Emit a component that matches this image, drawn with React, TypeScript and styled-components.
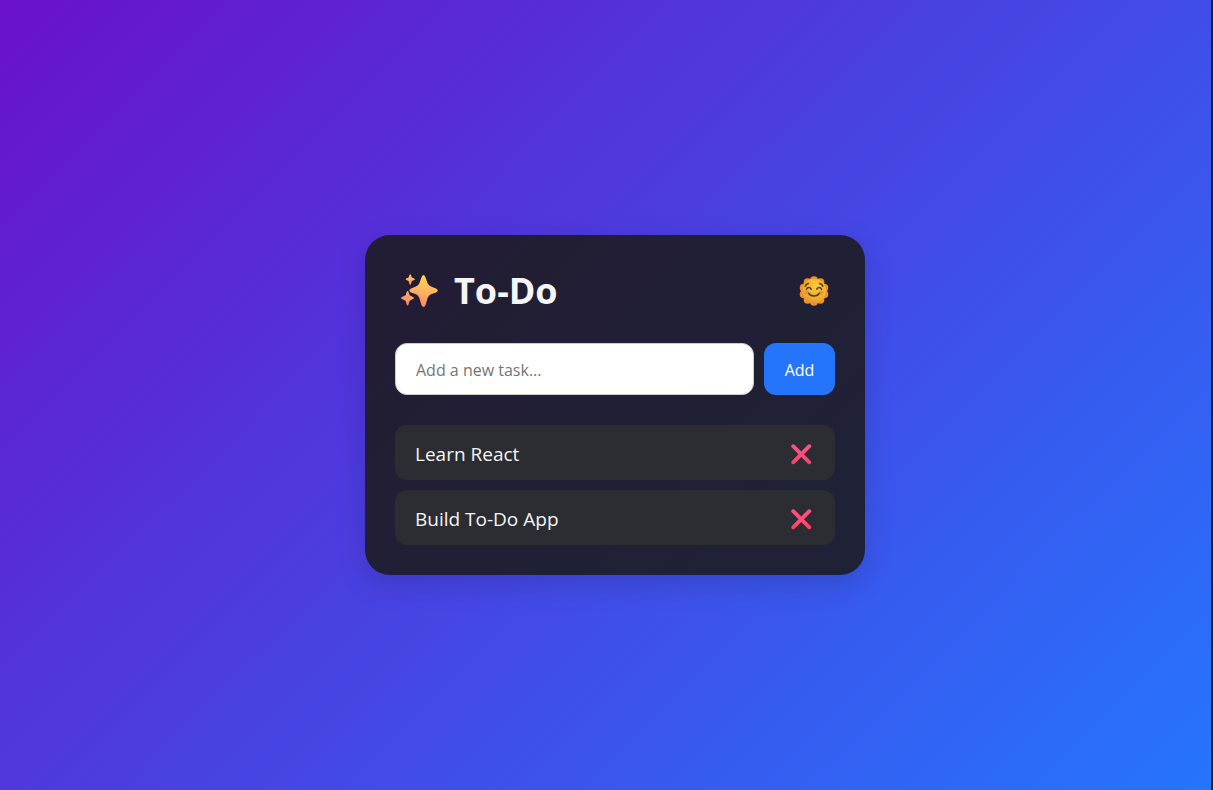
import React, { useState } from "react";
import styled, { createGlobalStyle } from "styled-components";

const GlobalStyle = createGlobalStyle`
  *, *::before, *::after { box-sizing: border-box; }
  body {
    margin: 0;
    background: #222226;
    font-family: "Segoe UI", "Open Sans", "Noto Sans", sans-serif;
  }
  button, input { font-family: inherit; }
`;

const Page = styled.div`
  display: flex;
  align-items: center;
  justify-content: center;
  min-height: 100vh;
  margin-right: 2px;
  padding: 20px 0 0 19px;
  background: linear-gradient(135deg, #6a11cb, #2575fc);
`;

const Card = styled.main`
  width: 100%;
  max-width: 500px;
  padding: 30px;
  border-radius: 25px;
  background: rgba(27, 26, 29, 0.88);
  box-shadow: 0 8px 30px rgba(0, 0, 0, 0.15);
  color: #f5f5f5;
`;

const Header = styled.header`
  display: flex;
  align-items: center;
  justify-content: space-between;
  height: 51px;
  margin-bottom: 27px;
  padding: 0 6px;
`;

const Title = styled.h1`
  display: flex;
  align-items: center;
  gap: 16px;
  margin: 0;
  font-size: 36px;
  line-height: 52px;
  font-weight: 700;
`;

const IconButton = styled.button`
  display: flex;
  padding: 0;
  border: 0;
  background: none;
  cursor: pointer;
`;

const TaskForm = styled.form`
  display: flex;
  gap: 10px;
  margin-bottom: 30px;
`;

const TaskInput = styled.input`
  flex: 1;
  min-width: 0;
  height: 52px;
  padding: 2px 20px 0;
  border: 1px solid #ccc;
  border-radius: 12px;
  background: #fff;
  color: #222;
  font-size: 16px;
  &::placeholder { color: #757575; }
`;

const AddButton = styled.button`
  min-width: 71px;
  padding: 2px 20px 0;
  border: 0;
  border-radius: 12px;
  background: #2575fc;
  color: #fff;
  font-size: 16px;
  cursor: pointer;
`;

const TaskList = styled.ul`
  display: grid;
  gap: 10px;
  margin: 0;
  padding: 0;
  list-style: none;
`;

const TaskItem = styled.li`
  display: flex;
  align-items: center;
  justify-content: space-between;
  height: 55px;
  padding: 3px 23px 0 20px;
  border-radius: 12px;
  background: #2c2d32;
  font-size: 19px;
`;

const Sparkles = () => (
  <svg width="37" height="34" viewBox="0 0 37 34" aria-hidden="true">
    <defs>
      <linearGradient id="spark" x1="0.6" y1="0" x2="0.4" y2="1">
        <stop offset="0" stopColor="#ffd34f" />
        <stop offset="0.45" stopColor="#ffb961" />
        <stop offset="1" stopColor="#ff8368" />
      </linearGradient>
      <linearGradient id="sparkLow" x1="0.6" y1="0" x2="0.4" y2="1">
        <stop offset="0" stopColor="#ffb45f" />
        <stop offset="1" stopColor="#ff8070" />
      </linearGradient>
    </defs>
    <g fill="url(#spark)">
      <path d="M20.600 3Q22.500 -1 24.400 3L26.500 9Q27.500 11.500 30 12.500L35 14.500Q38.500 16.500 35 18.500L30 20.300Q27.500 21.200 26.600 24L24.600 31Q22.500 35 20.400 31L18.400 24Q17.500 21.200 15 20.300L10 18.500Q6.500 16.500 10 14.500L15 12.500Q17.500 11.500 18.500 9Z" />
      <path d="M8.500 1Q9.200-.5 9.900 1L10.800 3.500 13.300 4.500Q14.500 5.300 13.300 6L10.800 7 9.900 10.300Q9.200 11.800 8.500 10.300L7.600 7 5.200 6Q4 5.300 5.200 4.500L7.600 3.500Z" />
      <path fill="url(#sparkLow)" d="M5.700 18Q6.600 16 7.500 18L8.600 21.200 12 22.900Q14 24 12 25.100L8.600 26.700 7.500 30.500Q6.600 32.500 5.700 30.500L4.600 26.700 1 25.100Q-1 24 1 22.900L4.600 21.200Z" />
    </g>
  </svg>
);

const petals = Array.from({ length: 10 }, (_, i) => (i * Math.PI) / 5);

const Sun = () => (
  <svg width="30" height="30" viewBox="0 0 30 30" aria-hidden="true">
    <defs>
      <radialGradient id="face" cx="0.6" cy="0.3" r="0.8">
        <stop offset="0" stopColor="#fccb3d" />
        <stop offset="0.65" stopColor="#eead2b" />
        <stop offset="1" stopColor="#dc8d35" />
      </radialGradient>
    </defs>
    <g fill="#f68b27">
      {petals.map((a) => (
        <circle key={a} cx={15 + 10.8 * Math.sin(a)} cy={15 - 10.8 * Math.cos(a)} r="4" />
      ))}
    </g>
    <circle cx="15" cy="15" r="12.300" fill="url(#face)" />
    <g fill="#f47e35" opacity="0.65">
      <circle cx="7.600" cy="16.300" r="2" />
      <circle cx="22.400" cy="16.300" r="2" />
    </g>
    <g fill="none" stroke="#503d31" strokeWidth="1.500" strokeLinecap="round">
      <path d="M7.500 13.300C8.300 11 11.300 11 12.200 13.300M17.800 13.300C18.700 11 21.700 11 22.500 13.300" />
      <path d="M9.600 17.200C11.600 20.900 18.400 20.900 20.400 17.200" />
      <path d="M6.200 10.300C6.800 8.500 8 7.600 9.500 7.500M20.500 7.500C22 7.600 23.200 8.500 23.800 10.300" />
    </g>
  </svg>
);

const Cross = () => (
  <svg width="21" height="21" viewBox="0 0 21 21" aria-hidden="true">
    <defs>
      <linearGradient id="cross" x1="0" y1="0" x2="0" y2="21" gradientUnits="userSpaceOnUse">
        <stop offset="0" stopColor="#ff5184" />
        <stop offset="0.6" stopColor="#ff4c7a" />
        <stop offset="1" stopColor="#f43f5b" />
      </linearGradient>
    </defs>
    <path d="M2.200 2.200 18.300 18.300M18.300 2.200 2.200 18.300" fill="none" stroke="url(#cross)" strokeWidth="3.800" strokeLinecap="round" />
  </svg>
);

export default function App() {
  const [tasks, setTasks] = useState<string[]>(["Learn React", "Build To-Do App"]);
  const [draft, setDraft] = useState("");

  const addTask = (event: React.FormEvent) => {
    event.preventDefault();
    const text = draft.trim();
    if (!text) return;
    setTasks([...tasks, text]);
    setDraft("");
  };

  return (
    <>
      <GlobalStyle />
      <Page>
        <Card>
          <Header>
            <Title>
              <Sparkles />
              To-Do
            </Title>
            <IconButton type="button" aria-label="Toggle theme">
              <Sun />
            </IconButton>
          </Header>
          <TaskForm onSubmit={addTask}>
            <TaskInput
              type="text"
              aria-label="New task"
              placeholder="Add a new task..."
              value={draft}
              onChange={(event) => setDraft(event.target.value)}
            />
            <AddButton type="submit">Add</AddButton>
          </TaskForm>
          <TaskList>
            {tasks.map((task, index) => (
              <TaskItem key={index}>
                {task}
                <IconButton
                  type="button"
                  aria-label={`Delete ${task}`}
                  onClick={() => setTasks(tasks.filter((_, i) => i !== index))}
                >
                  <Cross />
                </IconButton>
              </TaskItem>
            ))}
          </TaskList>
        </Card>
      </Page>
    </>
  );
}
